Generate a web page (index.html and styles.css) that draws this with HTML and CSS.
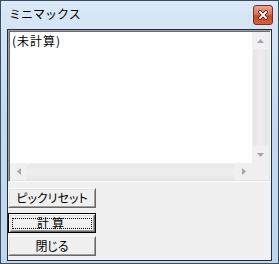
FILE: index.html
```html
<!DOCTYPE html>
<html lang="ja">
<head>
  <meta charset="UTF-8">
  <title>ミニマックス</title>
  <link rel="stylesheet" href="styles.css">
</head>
<body>
<div class="window">
  <div class="titlebar">
    <span class="title">ミニマックス</span>
    <div class="close">
      <svg width="10" height="10" viewBox="0 0 10 10">
        <path d="M2 2 L8 8 M8 2 L2 8" stroke="#6b2414" stroke-width="3.6" stroke-linecap="square"/>
        <path d="M2 2 L8 8 M8 2 L2 8" stroke="#ffffff" stroke-width="1.8" stroke-linecap="square"/>
      </svg>
    </div>
  </div>
  <div class="client">
    <div class="listbox">
      <div class="list-text">(未計算)</div>
      <div class="vscroll">
        <div class="arrow-btn">
          <svg width="7" height="4" viewBox="0 0 7 4"><path d="M3.5 0 L7 4 L0 4 Z" fill="#a6a6a6"/></svg>
        </div>
        <div class="track"></div>
        <div class="arrow-btn">
          <svg width="7" height="4" viewBox="0 0 7 4"><path d="M0 0 L7 0 L3.5 4 Z" fill="#a6a6a6"/></svg>
        </div>
      </div>
      <div class="hscroll">
        <div class="arrow-btn">
          <svg width="4" height="7" viewBox="0 0 4 7"><path d="M4 0 L4 7 L0 3.5 Z" fill="#a6a6a6"/></svg>
        </div>
        <div class="track"></div>
        <div class="arrow-btn">
          <svg width="4" height="7" viewBox="0 0 4 7"><path d="M0 0 L4 3.5 L0 7 Z" fill="#a6a6a6"/></svg>
        </div>
      </div>
      <div class="corner"></div>
    </div>
    <div class="buttons">
      <div class="btn btn-reset">ピックリセット</div>
      <div class="btn btn-default btn-calc">計算</div>
      <div class="btn btn-close">閉じる</div>
    </div>
  </div>
</div>
</body>
</html>
```

FILE: styles.css
```css
body {
  margin: 0;
  font-family: "Noto Sans CJK JP", sans-serif;
}
.window {
  width: 279px;
  height: 264px;
  box-sizing: border-box;
  border: 1px solid #3b4d61;
  background: linear-gradient(#dae8f7, #c6dbf1 40%, #c0d6ef);
  padding: 0 6px 2px;
  display: flex;
  flex-direction: column;
}
.titlebar {
  height: 28px;
  display: flex;
  justify-content: space-between;
  align-items: flex-start;
}
.title {
  font-size: 12px;
  line-height: 16px;
  margin: 5px 0 0 2px;
  color: #000;
}
.close {
  width: 20px;
  height: 20px;
  box-sizing: border-box;
  margin: 4px -1px 0 0;
  border: 1px solid #7a2e22;
  border-radius: 3px;
  background: linear-gradient(#e9a592, #d8735b 45%, #c9492c 55%, #d0633f);
  display: flex;
  align-items: center;
  justify-content: center;
}
.close svg {
  display: block;
}
.client {
  flex: 1;
  border: 1px solid #222c38;
  background: #f0f0f0;
  display: flex;
  flex-direction: column;
}
.listbox {
  height: 152px;
  box-sizing: border-box;
  border-top: 1px solid #a0a0a0;
  border-left: 1px solid #a0a0a0;
  border-bottom: 1px solid #ffffff;
  border-right: 1px solid #ffffff;
  box-shadow: inset 1px 1px #696969, inset -1px -1px #e3e3e3;
  padding: 1px;
  background: #fff;
  display: grid;
  grid-template-columns: 1fr 17px;
  grid-template-rows: 1fr 17px;
}
.list-text {
  font-size: 12px;
  line-height: 15px;
  padding: 1px 0 0 2px;
  letter-spacing: 1px;
  color: #000;
}
.vscroll {
  display: flex;
  flex-direction: column;
  background: #f0f0f0;
}
.hscroll {
  display: flex;
  background: #f0f0f0;
}
.arrow-btn {
  width: 17px;
  height: 17px;
  flex: none;
  display: flex;
  align-items: center;
  justify-content: center;
  background: #f0f0f0;
}
.arrow-btn svg {
  display: block;
}
.vscroll .track {
  flex: 1;
  border-left: 1px dotted #fafafa;
  border-right: 1px dotted #fafafa;
  background: linear-gradient(90deg, #e6e6e6, #ededed 50%, #e6e6e6);
}
.hscroll .track {
  flex: 1;
  border-top: 1px dotted #fafafa;
  border-bottom: 1px dotted #e0e0e0;
  background: linear-gradient(#e9e9e9, #eeeeee 50%, #e9e9e9);
}
.corner {
  background: #f0f0f0;
}
.buttons {
  display: flex;
  flex-direction: column;
  align-items: flex-start;
  padding-top: 6px;
}
.btn {
  position: relative;
  width: 88px;
  height: 20px;
  box-sizing: border-box;
  border-top: 1px solid #ffffff;
  border-left: 1px solid #ffffff;
  border-bottom: 1px solid #696969;
  border-right: 1px solid #696969;
  box-shadow: inset 1px 1px #e3e3e3, inset -1px -1px #a0a0a0;
  background: #f0f0f0;
  font-size: 12px;
  line-height: 18px;
  text-align: center;
  color: #000;
  font-feature-settings: "palt";
}
.btn-calc {
  margin-top: 5px;
  letter-spacing: 3px;
}
.btn-close {
  margin-top: 3px;
}
.btn-default {
  border: 1px solid #000;
  box-shadow: inset 1px 1px #ffffff, inset -1px -1px #696969, inset 2px 2px #e3e3e3, inset -2px -2px #a0a0a0;
}
.btn-default::after {
  content: "";
  position: absolute;
  left: 3px;
  right: 3px;
  top: 4px;
  bottom: 3px;
  border: 1px dotted #000;
}
```
